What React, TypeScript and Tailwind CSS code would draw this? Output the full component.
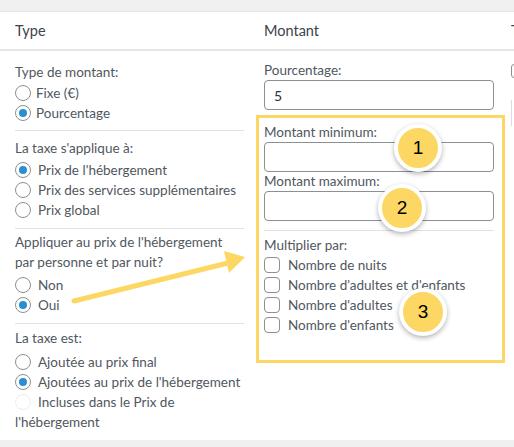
import React from "react";

const Radio = ({ checked, faded }: { checked?: boolean; faded?: boolean }) => (
  <span
    className={`flex h-4 w-4 shrink-0 items-center justify-center rounded-full border bg-white ${
      faded ? "border-[#eceded]" : "border-[#8c8f94]"
    }`}
  >
    {checked && <span className="h-2 w-2 rounded-full bg-[#2b8fcf]" />}
  </span>
);

const RadioRow = ({
  label,
  checked,
  faded,
  gap = "gap-[7px]",
}: {
  label: string;
  checked?: boolean;
  faded?: boolean;
  gap?: string;
}) => (
  <div className={`flex h-5 items-center whitespace-nowrap ${gap}`}>
    <Radio checked={checked} faded={faded} />
    <span>{label}</span>
  </div>
);

const CheckRow = ({ label }: { label: string }) => (
  <div className="flex h-5 items-center gap-[8px] whitespace-nowrap">
    <span className="h-4 w-4 shrink-0 rounded-[4px] border border-[#8c8f94] bg-white" />
    <span>{label}</span>
  </div>
);

const Badge = ({ n, className }: { n: string; className: string }) => (
  <div
    className={`absolute flex h-[48px] w-[48px] items-center justify-center rounded-full border-[4px] border-white bg-[#fdd763] font-['Liberation_Sans',sans-serif] text-[19px] text-black shadow-[0_2px_5px_rgba(0,0,0,0.3)] ${className}`}
  >
    {n}
  </div>
);

export default function App() {
  return (
    <div className="relative h-[447px] w-[514px] overflow-hidden bg-[#f0f0f1] font-['Lato',sans-serif] text-[13.5px] text-[#50575e]">
      <div className="mt-[11px] border-t border-[#e2e4e7] bg-white">
        {/* header */}
        <div className="flex h-[39px] items-center border-b-2 border-[#e5e5e5] text-[14.5px] text-[#3c434a]">
          <div className="w-[249px] shrink-0 pl-[15px]">Type</div>
          <div className="w-[260px] shrink-0 pl-[15px]">Montant</div>
          <div className="shrink-0 pl-[2px]">Taxe</div>
        </div>
        {/* body */}
        <div className="flex h-[389px] overflow-hidden">
          <div className="w-[249px] shrink-0 pl-[15px] pr-[5px] pt-[11px]">
            <div className="leading-5">Type de montant:</div>
            <div className="mt-[1px]">
              <RadioRow label="Fixe (€)" gap="gap-[5px]" />
              <RadioRow label="Pourcentage" checked gap="gap-[5px]" />
            </div>
            <div className="mt-[7px] h-px bg-[#e1e2e3]" />
            <div className="mt-[7px] leading-5">La taxe s'applique à:</div>
            <div className="mt-[2px]">
              <RadioRow label="Prix de l'hébergement" checked />
              <RadioRow label="Prix des services supplémentaires" />
              <RadioRow label="Prix global" />
            </div>
            <div className="mt-[8px] h-px bg-[#e1e2e3]" />
            <div className="mt-[3px] leading-5">Appliquer au prix de l'hébergement</div>
            <div className="leading-5">par personne et par nuit?</div>
            <div className="mt-[3px]">
              <RadioRow label="Non" />
              <RadioRow label="Oui" checked />
            </div>
            <div className="mt-[8px] h-px bg-[#e1e2e3]" />
            <div className="mt-[4px] leading-5">La taxe est:</div>
            <div className="mt-[4px]">
              <RadioRow label="Ajoutée au prix final" />
              <RadioRow label="Ajoutées au prix de l'hébergement" checked />
              <RadioRow label="Incluses dans le Prix de" faded />
              <div className="leading-5">l'hébergement</div>
            </div>
          </div>
          <div className="w-[260px] shrink-0 pl-[15px] pr-[15px] pt-[10px]">
            <div className="leading-[19px]">Pourcentage:</div>
            <div className="flex h-[30px] items-center rounded-[4px] border border-[#8c8f94] px-[9px] text-[14px] text-[#2c3338]">
              5
            </div>
            <div className="mt-[12px] leading-5">Montant minimum:</div>
            <div className="h-[30px] rounded-[4px] border border-[#8c8f94]" />
            <div className="leading-[19px]">Montant maximum:</div>
            <div className="h-[30px] rounded-[4px] border border-[#8c8f94]" />
            <div className="mt-[9px] h-px bg-[#e1e2e3]" />
            <div className="mt-[5px] leading-[19px]">Multiplier par:</div>
            <CheckRow label="Nombre de nuits" />
            <CheckRow label="Nombre d'adultes et d'enfants" />
            <CheckRow label="Nombre d'adultes" />
            <CheckRow label="Nombre d'enfants" />
          </div>
          <div className="shrink-0 pt-[13px]">
            <div className="ml-[2px] h-[14px] w-[20px] rounded-[3px] border border-[#8c8f94]" />
            <div className="ml-[2px] mt-[22px] h-[26px] w-[20px] border-l border-[#dcdcde]" />
          </div>
        </div>
      </div>

      {/* annotations */}
      <div className="pointer-events-none absolute left-[256px] top-[115px] h-[248px] w-[249px] border-[3.5px] border-[#fdd763]" />
      <svg className="absolute left-0 top-0" width="514" height="447" viewBox="0 0 514 447">
        <line x1="74" y1="301" x2="228" y2="263" stroke="#fdd763" strokeWidth="5" strokeLinecap="round" />
        <polygon points="245,257 224,251 229,273" fill="#fdd763" />
      </svg>
      <Badge n="1" className="left-[394px] top-[124px]" />
      <Badge n="2" className="left-[378px] top-[184px]" />
      <Badge n="3" className="left-[399px] top-[288px]" />
    </div>
  );
}
